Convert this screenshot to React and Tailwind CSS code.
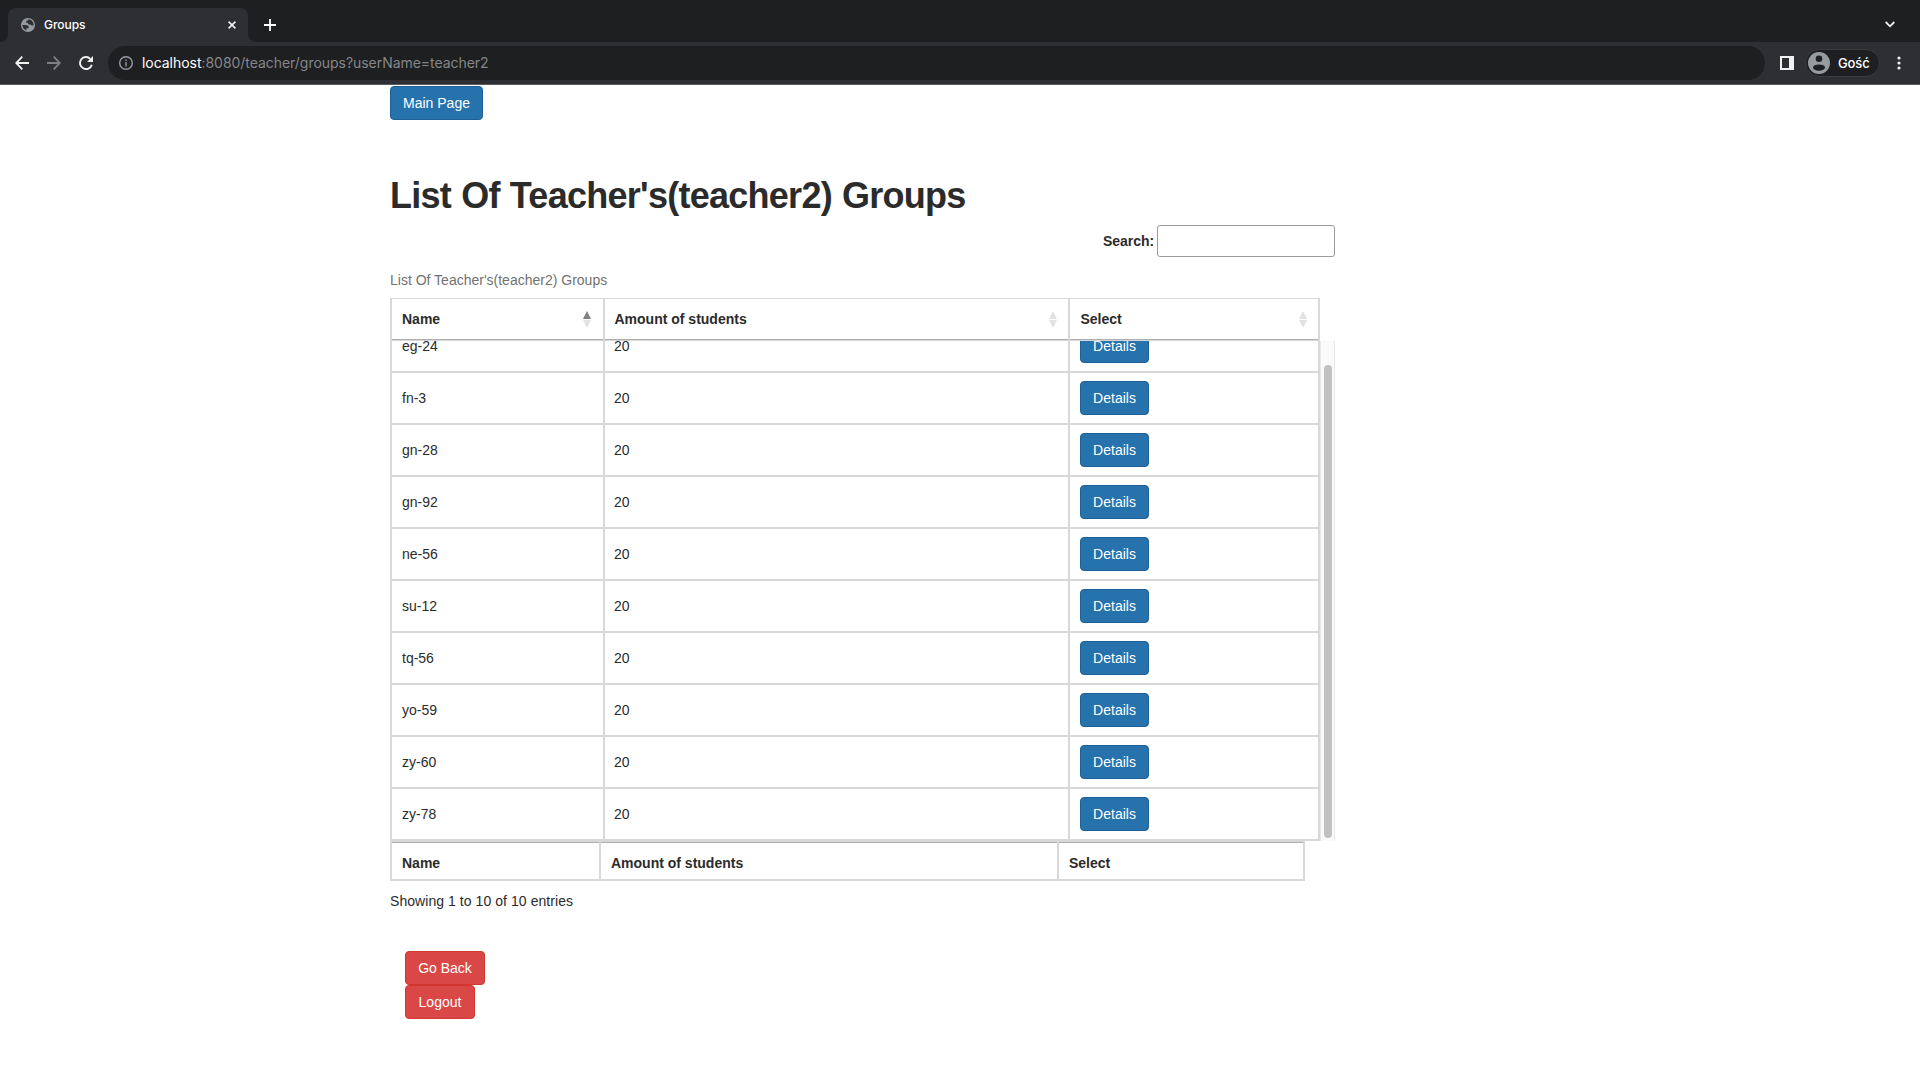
import React from "react";

const rows = ["fn-3", "gn-28", "gn-92", "ne-56", "su-12", "tq-56", "yo-59", "zy-60", "zy-78"];

function Button({ children, className = "" }) {
  return (
    <button
      className={`flex h-[34px] items-center justify-center rounded-[4px] border text-[14px] leading-5 text-white ${className}`}
    >
      {children}
    </button>
  );
}

function Details() {
  return <Button className="w-[69px] shrink-0 border-[#1f6096] bg-[#2672ad]">Details</Button>;
}

function Sort({ active = false }) {
  return (
    <svg width="8" height="17" viewBox="0 0 8 17" className="shrink-0">
      <path d="M0 8 4 0 8 8z" fill={active ? "#808080" : "#e2e2e2"} />
      <path d="M0 9 4 17 8 9z" fill="#e2e2e2" />
    </svg>
  );
}

function BrowserChrome() {
  return (
    <header className="h-[85px] border-b border-[#5b5c60] bg-[#2e2f33] font-['Inter',sans-serif] text-white">
      <div className="flex h-[42px] bg-[#1e1f21]">
        <div className="flex w-2 items-end bg-[#2e2f33]">
          <div className="h-full w-2 rounded-br-[8px] bg-[#1e1f21]" />
        </div>
        <div className="mt-2 flex h-[34px] w-[240px] items-center rounded-t-[8px] bg-[#2e2f33] pl-[13px] pr-[12px]">
          <svg width="14" height="14" viewBox="2 2 20 20">
            <circle cx="12" cy="12" r="10" fill="#969ba0" />
            <path
              d="M4 12h4.400c3.400 0 4.900 1.500 4.600 4.600H9.800v2.800C6.300 18.600 4 15.800 4 12zM14 4.300c-1.800 0-2.500.6-2.500 1.700H9.500v2.800h2.200c.2 1.600.9 2.500 2.500 2.500h1.200c.5 1 1.500 1.500 2.800 1.500H20c.5-4.200-2.200-7.500-6-8.500z"
              fill="#2e2f33"
            />
          </svg>
          <span className="ml-[9px] text-[12px] font-medium leading-4 tracking-[-0.05px]">Groups</span>
          <svg className="ml-auto" width="8" height="8" viewBox="0 0 8 8" fill="none" stroke="#f1f1f1" strokeWidth="1.6">
            <path d="M.6.6l6.800 6.800M7.400.6.6 7.400" />
          </svg>
        </div>
        <div className="w-2 self-end bg-[#2e2f33]">
          <div className="h-2 w-2 rounded-bl-[8px] bg-[#1e1f21]" />
        </div>
        <svg className="ml-2 mt-[19px]" width="12" height="12" viewBox="0 0 12 12" stroke="#fff" strokeWidth="1.8">
          <path d="M6 0v12M0 6h12" />
        </svg>
        <svg className="ml-auto mr-[25px] mt-[21px]" width="10" height="7" viewBox="0 0 10 7" fill="none" stroke="#f1f1f1" strokeWidth="1.8">
          <path d="M.7 1 5 5.300 9.300 1" />
        </svg>
      </div>
      <div className="flex h-[42px] items-center">
        <svg className="ml-[15px]" width="14" height="14" viewBox="0 0 14 14" fill="none" stroke="#f1f1f1" strokeWidth="1.8">
          <path d="M14 7H1.300M7.300.700 1.200 7l6.100 6.300" />
        </svg>
        <svg className="ml-[18px]" width="14" height="14" viewBox="0 0 14 14" fill="none" stroke="#7f8084" strokeWidth="1.8">
          <path d="M0 7h12.700M6.700.700 12.800 7l-6.100 6.300" />
        </svg>
        <svg className="ml-[18px]" width="14" height="14" viewBox="0 0 14 14">
          <path d="M12.800 8.700A6 6 0 1 1 11.300 2.800" fill="none" stroke="#f1f1f1" strokeWidth="1.900" />
          <path d="M14 0v6H8z" fill="#f1f1f1" />
        </svg>
        <div className="ml-[15px] flex h-[34px] w-[1657px] items-center rounded-full bg-[#1e1f21] pl-[11px]">
          <svg width="14" height="14" viewBox="0 0 14 14">
            <circle cx="7" cy="7" r="6.300" fill="none" stroke="#969ba0" strokeWidth="1.400" />
            <path d="M6.300 6h1.400v4.500H6.300zM6.300 3.500h1.400v1.400H6.300z" fill="#969ba0" />
          </svg>
          <span className="ml-[9px] whitespace-nowrap text-[14px] leading-5 tracking-[-0.04px] text-[#85868a]">
            <span className="text-white">localhost</span>:8080/teacher/groups?userName=teacher2
          </span>
        </div>
        <svg className="ml-[15px]" width="14" height="14" viewBox="0 0 14 14">
          <path d="M0 0h14v14H0zM2 2v10h7V2z" fill="#f1f1f1" fillRule="evenodd" />
        </svg>
        <div className="ml-[11px] flex h-7 w-[75px] items-center rounded-full border border-[#3a3b3f] bg-[#1e1f21] pl-[2px]">
          <svg width="22" height="22" viewBox="0 0 22 22">
            <circle cx="11" cy="11" r="11" fill="#969ba0" />
            <circle cx="11" cy="6.800" r="3.300" fill="#1e1f21" />
            <ellipse cx="11" cy="15.600" rx="6" ry="3.200" fill="#1e1f21" />
          </svg>
          <span className="ml-2 text-[13px] font-medium leading-4 tracking-[-0.1px]">Gość</span>
        </div>
        <svg className="ml-[17px]" width="4" height="14" viewBox="0 0 4 14" fill="#f1f1f1">
          <circle cx="2" cy="2" r="1.600" />
          <circle cx="2" cy="7" r="1.600" />
          <circle cx="2" cy="12" r="1.600" />
        </svg>
      </div>
    </header>
  );
}

function Row({ name, clipped = false }) {
  return (
    <div
      className={`flex border-b-2 border-[#d8d8d8] ${clipped ? "h-8 items-end overflow-hidden" : "h-[52px] items-center"}`}
    >
      <div className={`flex w-[211px] items-center pl-[10px] ${clipped ? "h-[50px]" : "h-full"}`}>{name}</div>
      <div className={`flex w-[467px] items-center border-x-2 border-[#d8d8d8] pl-[9px] ${clipped ? "h-[50px]" : "h-full"}`}>20</div>
      <div className={`flex items-center pl-[10px] ${clipped ? "h-[50px]" : "h-full"}`}>
        <Details />
      </div>
    </div>
  );
}

export default function App() {
  return (
    <div className="h-[1080px] w-full overflow-hidden bg-white">
      <BrowserChrome />
      <main className="ml-[390px] w-[945px] pt-px font-['Liberation_Sans',sans-serif] text-[14px] leading-5 text-[#2b2b2b]">
        <Button className="w-[93px] border-[#1f6096] bg-[#2672ad]">Main Page</Button>
        <h1 className="mt-[56px] whitespace-nowrap text-[36px] font-bold leading-10 tracking-[-0.73px] [word-spacing:0.8px]">
          List Of Teacher's(teacher2) Groups
        </h1>
        <div className="mt-[9px] flex items-center justify-end">
          <label htmlFor="search" className="mr-[3px] font-bold tracking-[-0.05px]">Search:</label>
          <input id="search" className="h-8 w-[178px] rounded-[3px] border border-[#9b9b9b] bg-white px-1 outline-none" />
        </div>
        <p className="mt-[13px] text-[#727272]">List Of Teacher's(teacher2) Groups</p>
        <section className="mt-2">
          <div className="flex h-[43px] w-[930px] border-x-2 border-b border-t border-[#d8d8d8] font-bold">
            <div className="flex h-[41px] w-[211px] items-center border-b border-[#adadad] pl-[10px] pr-[12px]">
              <span>Name</span>
              <span className="ml-auto"><Sort active /></span>
            </div>
            <div className="w-[2px] bg-[#d8d8d8]" />
            <div className="flex h-[41px] w-[463px] items-center border-b border-[#adadad] pl-[9.5px] pr-[11px]">
              <span>Amount of students</span>
              <span className="ml-auto"><Sort /></span>
            </div>
            <div className="w-[2px] bg-[#d8d8d8]" />
            <div className="flex h-[41px] flex-1 items-center border-b border-[#adadad] pl-[10.5px] pr-[11px]">
              <span>Select</span>
              <span className="ml-auto"><Sort /></span>
            </div>
          </div>
          <div className="flex h-[500px]">
            <div className="w-[930px] border-x-2 border-[#d8d8d8]">
              <Row name="eg-24" clipped />
              {rows.map((name) => (
                <Row key={name} name={name} />
              ))}
            </div>
            <div className="w-[15px] border-x border-[#e8e8e8] bg-[#fafafa] pl-[3px] pt-6">
              <div className="h-[473px] w-2 rounded-full bg-[#c1c1c1]" />
            </div>
          </div>
          <div className="flex h-10 w-[915px] border-x-2 border-b-2 border-t border-[#d8d8d8] font-bold">
            <div className="flex w-[207px] items-center border-t border-[#adadad] pl-[10px] pt-1">Name</div>
            <div className="w-[2px] bg-[#d8d8d8]" />
            <div className="flex w-[456px] items-center border-t border-[#adadad] pl-[10px] pt-1">Amount of students</div>
            <div className="w-[2px] bg-[#d8d8d8]" />
            <div className="flex flex-1 items-center border-t border-[#adadad] pl-[10px] pt-1">Select</div>
          </div>
        </section>
        <p className="mt-[10px] tracking-[0.06px]">Showing 1 to 10 of 10 entries</p>
        <div className="ml-[15px] mt-10">
          <Button className="w-20 border-[#d43530] bg-[#d94846]">Go Back</Button>
          <Button className="w-[70px] border-[#d43530] bg-[#d94846]">Logout</Button>
        </div>
      </main>
    </div>
  );
}
